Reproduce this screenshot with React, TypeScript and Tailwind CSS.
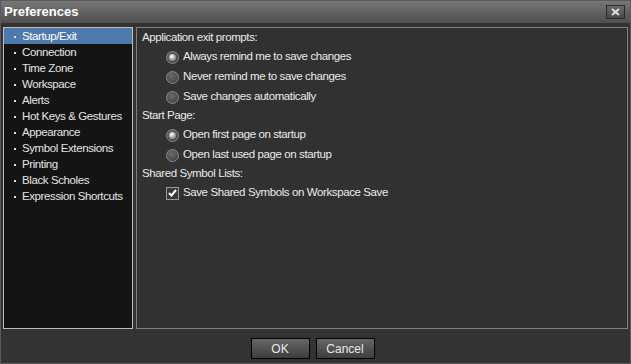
import React from "react";

const items = [
  "Startup/Exit",
  "Connection",
  "Time Zone",
  "Workspace",
  "Alerts",
  "Hot Keys & Gestures",
  "Appearance",
  "Symbol Extensions",
  "Printing",
  "Black Scholes",
  "Expression Shortcuts",
];

function Radio({ checked, label }: { checked?: boolean; label: string }) {
  return (
    <div className="flex h-[20px] items-center pl-[24px]">
      <span className="relative flex h-[13px] w-[13px] items-center justify-center rounded-full border border-[#8a8a8a] bg-[radial-gradient(circle_at_40%_35%,#6a6a6a,#3c3c3c)]">
        {checked && (
          <span className="h-[7px] w-[7px] rounded-full bg-[radial-gradient(circle_at_40%_35%,#ffffff,#9a9a9a_60%,#6a6a6a)]" />
        )}
      </span>
      <span className="ml-[4px]">{label}</span>
    </div>
  );
}

export default function App() {
  return (
    <div
      className="flex h-[364px] w-[631px] flex-col border border-[#5a5a5a] bg-[#333333] text-[11.5px] tracking-[-0.4px] text-[#eaeaea]"
      style={{ fontFamily: '"Liberation Sans", Arial, sans-serif' }}
    >
      <div className="flex h-[22px] items-center justify-between bg-gradient-to-b from-[#767676] to-[#505050] pl-[3px] pr-[5px]">
        <span className="text-[13px] font-bold tracking-normal text-white">Preferences</span>
        <span className="flex h-[14px] w-[19px] items-center justify-center border border-[#2a2a2a] bg-gradient-to-b from-[#6a6a6a] to-[#4a4a4a]">
          <svg width="9" height="8" viewBox="0 0 9 8">
            <path d="M1 1 L8 7 M8 1 L1 7" stroke="#e0e0e0" strokeWidth="2" />
          </svg>
        </span>
      </div>
      <div className="flex flex-1 gap-[3px] px-[2px] pt-[4px]">
        <div className="h-[302px] w-[130px] border border-[#bdbdbd] bg-[#141414]">
          {items.map((it, i) => (
            <div
              key={it}
              className={`flex h-[16px] items-center pl-[10px] pt-[1px] ${i === 0 ? "bg-[#4d79ad] text-white" : "text-[#e4e4e4]"}`}
            >
              <span className="mr-[6px] h-[2px] w-[2px] bg-[#e0e0e0]" />
              {it}
            </div>
          ))}
        </div>
        <div className="h-[302px] flex-1 border border-[#7e7e7e] bg-[#313131] pl-[5px] pt-[1px]">
          <div className="flex h-[18px] items-center">Application exit prompts:</div>
          <Radio checked label="Always remind me to save changes" />
          <Radio label="Never remind me to save changes" />
          <Radio label="Save changes automatically" />
          <div className="flex h-[18px] items-center">Start Page:</div>
          <Radio checked label="Open first page on startup" />
          <Radio label="Open last used page on startup" />
          <div className="flex h-[18px] items-center">Shared Symbol Lists:</div>
          <div className="flex h-[20px] items-center pl-[24px]">
            <span className="flex h-[13px] w-[13px] items-center justify-center border border-[#9a9a9a] bg-[#3a3a3a]">
              <svg width="9" height="8" viewBox="0 0 9 8">
                <path d="M1 4 L3.5 6.5 L8 1" stroke="#ffffff" strokeWidth="2" fill="none" />
              </svg>
            </span>
            <span className="ml-[4px]">Save Shared Symbols on Workspace Save</span>
          </div>
        </div>
      </div>
      <div className="flex h-[32px] items-start justify-center gap-[6px] pr-[6px] pt-[7px]">
        <button className="h-[21px] w-[59px] border border-black bg-gradient-to-b from-[#666666] to-[#3e3e3e] text-[12px] tracking-normal text-[#e8e8e8]">
          OK
        </button>
        <button className="h-[21px] w-[59px] border border-black bg-gradient-to-b from-[#666666] to-[#3e3e3e] text-[12px] tracking-normal text-[#e8e8e8]">
          Cancel
        </button>
      </div>
    </div>
  );
}
